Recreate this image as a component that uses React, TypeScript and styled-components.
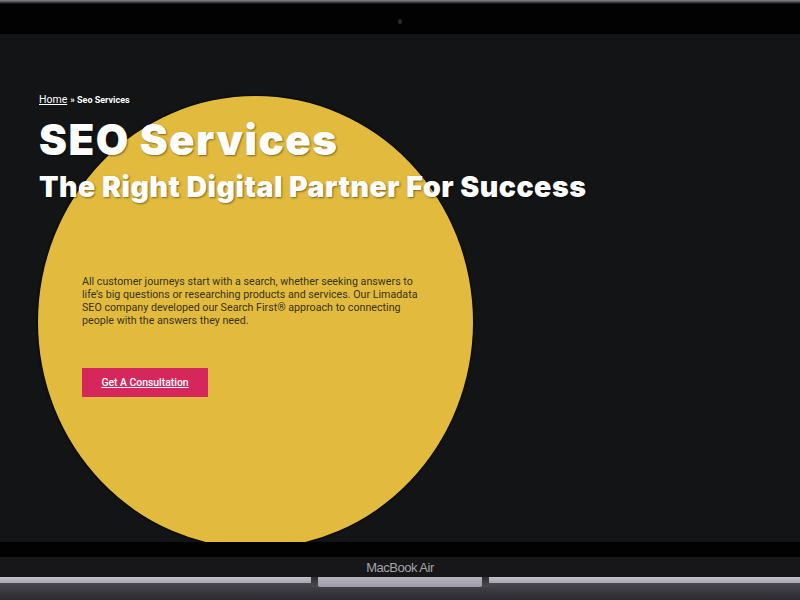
import React from "react";
import styled, { createGlobalStyle } from "styled-components";

const Global = createGlobalStyle`
  html, body { margin: 0; padding: 0; background: #020203; }
  body { width: 800px; height: 600px; overflow: hidden; font-family: "Roboto", "Liberation Sans", sans-serif; }
`;

const Device = styled.div`
  width: 800px;
  height: 600px;
  display: flex;
  flex-direction: column;
  background: #020203;
`;

const TopBezel = styled.div`
  height: 34px;
  flex: none;
  display: flex;
  align-items: center;
  justify-content: center;
  background: linear-gradient(#8a8a90 0px, #4a4a50 2px, #020203 4px, #020203 100%);
`;

const Camera = styled.span`
  width: 4px;
  height: 5px;
  border-radius: 50%;
  background: #2a2b30;
  margin-top: 8px;
`;

const Screen = styled.div`
  position: relative;
  height: 508px;
  flex: none;
  overflow: hidden;
  background: #131416;
`;

const Blob = styled.div`
  position: absolute;
  left: 38px;
  top: 62px;
  width: 435px;
  height: 452px;
  border-radius: 50%;
  background: #e2bb3e;
  box-shadow: 0 0 2px 1px rgba(0, 0, 0, 0.6);
`;

const Content = styled.div`
  position: relative;
  padding: 59px 0 0 39px;
`;

const Crumbs = styled.nav`
  font-family: "Roboto", "Liberation Sans", sans-serif;
  font-size: 9px;
  color: #ffffff;
  display: flex;
  gap: 3px;
  align-items: baseline;
`;

const CrumbLink = styled.a`
  color: #ffffff;
  text-decoration: underline;
  font-size: 10.5px;
`;

const CrumbCurrent = styled.span`
  font-weight: 700;
`;

const Title = styled.h1`
  margin: 12px 0 0;
  font-family: "Inter", "Liberation Sans", sans-serif;
  font-weight: 900;
  font-size: 42px;
  line-height: 44px;
  letter-spacing: 1.5px;
  color: #ffffff;
  text-shadow: 1px 1px 2px rgba(0, 0, 0, 0.45);
`;

const Subtitle = styled.h2`
  margin: 9px 0 0;
  font-family: "Inter", "Liberation Sans", sans-serif;
  font-weight: 900;
  font-size: 28.5px;
  line-height: 32px;
  letter-spacing: 0.5px;
  color: #ffffff;
  text-shadow: 1px 1px 2px rgba(0, 0, 0, 0.45);
`;

const Intro = styled.div`
  margin: 72px 0 0 43px;
  display: flex;
  flex-direction: column;
  align-items: flex-start;
  gap: 41px;
`;

const Lead = styled.p`
  margin: 0;
  font-family: "Roboto", "Liberation Sans", sans-serif;
  font-size: 10.7px;
  line-height: 13px;
  color: #3a3220;
  white-space: nowrap;
`;

const Cta = styled.a`
  display: flex;
  align-items: center;
  justify-content: center;
  width: 126px;
  height: 29px;
  background: #d6275d;
  color: #ffffff;
  font-family: "Roboto", "Liberation Sans", sans-serif;
  font-weight: 500;
  font-size: 10.4px;
  text-decoration: underline;
`;

const LowerBezel = styled.div`
  height: 15px;
  flex: none;
  background: #020203;
`;

const Chin = styled.div`
  height: 20px;
  flex: none;
  display: flex;
  align-items: center;
  justify-content: center;
  background: #17171a;
`;

const Label = styled.span`
  font-family: "Liberation Sans", "Roboto", sans-serif;
  font-size: 13px;
  letter-spacing: -0.5px;
  color: #a4a4a8;
`;

const Hinge = styled.div`
  flex: 1;
  display: flex;
  flex-direction: column;
  background: linear-gradient(#5e5d64 0px, #45444b 8px, #2a2a2f 100%);
`;

const HingeRow = styled.div`
  height: 10px;
  display: flex;
`;

const Rail = styled.div`
  flex: 1;
  height: 6px;
  background: linear-gradient(#c4c3cb, #a7a6ae);
`;

const Notch = styled.div`
  width: 178px;
  height: 10px;
  display: flex;
  justify-content: center;
  background: linear-gradient(#2e2e33, #4a4a50);
`;

const NotchLip = styled.div`
  width: 164px;
  height: 10px;
  border-radius: 0 0 2px 2px;
  background: linear-gradient(#b6b5be, #9d9ca6);
`;

export default function App() {
  return (
    <>
      <Global />
      <Device>
        <TopBezel>
          <Camera />
        </TopBezel>
        <Screen>
          <Blob />
          <Content>
            <Crumbs>
              <CrumbLink href="#">Home</CrumbLink>
              <CrumbCurrent>» Seo Services</CrumbCurrent>
            </Crumbs>
            <Title>SEO Services</Title>
            <Subtitle>The Right Digital Partner For Success</Subtitle>
            <Intro>
              <Lead>
                All customer journeys start with a search, whether seeking answers to
                <br />
                life’s big questions or researching products and services. Our Limadata
                <br />
                SEO company developed our Search First® approach to connecting
                <br />
                people with the answers they need.
              </Lead>
              <Cta href="#">Get A Consultation</Cta>
            </Intro>
          </Content>
        </Screen>
        <LowerBezel />
        <Chin>
          <Label>MacBook Air</Label>
        </Chin>
        <Hinge>
          <HingeRow>
            <Rail />
            <Notch>
              <NotchLip />
            </Notch>
            <Rail />
          </HingeRow>
        </Hinge>
      </Device>
    </>
  );
}
